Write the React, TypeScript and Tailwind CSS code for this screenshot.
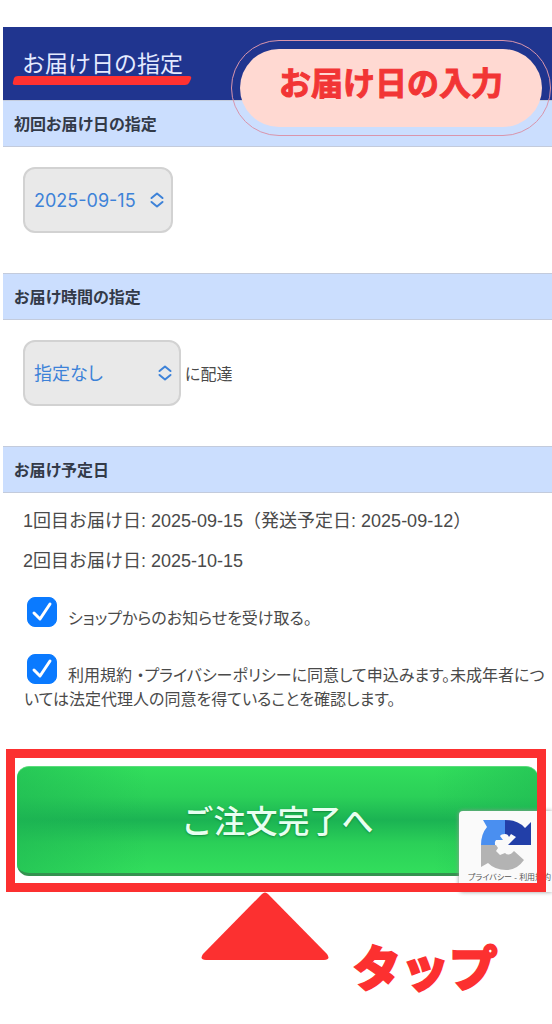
import type { ReactNode } from "react";

const schedule = [
  "1回目お届け日: 2025-09-15（発送予定日: 2025-09-12）",
  "2回目お届け日: 2025-10-15",
];

const agreements = [
  { id: "news", text: "ショップからのお知らせを受け取る。" },
  {
    id: "terms",
    text: "利用規約 ・プライバシーポリシーに同意して申込みます。未成年者については法定代理人の同意を得ていることを確認します。",
  },
];

function SectionTitle({ children }: { children: ReactNode }) {
  return (
    <h2 className="flex h-[47px] items-center border-y border-[#c3cbdc] bg-[#cbdefe] px-[11px] pt-0.5 text-base font-bold text-[#333a48] [font-feature-settings:'palt']">
      {children}
    </h2>
  );
}

function SelectBox({ id, label, value, className }: { id: string; label: string; value: string; className: string }) {
  return (
    <div className="relative w-fit">
      <select
        id={id}
        aria-label={label}
        className={`block h-[66px] appearance-none rounded-xl border-2 border-[#d2d2d2] bg-[#e9e9e9] pt-0.5 pl-[9px] leading-8 text-[#3d82d8] [font-feature-settings:'palt'] ${className}`}
      >
        <option>{value}</option>
      </select>
      <svg className="pointer-events-none absolute top-1/2 right-2 h-4 w-4 -translate-y-1/2" viewBox="0 0 16 16" fill="none" stroke="#3d82d8" strokeWidth="2" strokeLinecap="round" strokeLinejoin="round">
        <path d="M2.500 6L8 1.500 13.500 6M2.500 10L8 14.500l5.500-4.500" />
      </svg>
    </div>
  );
}

function RecaptchaBadge() {
  return (
    <div className="absolute right-0 bottom-0 h-[81px] w-[93px] rounded-l-sm bg-[#fafafa] shadow-[0_0_4px_#999]">
      <svg className="mt-[9px] ml-[22px] h-[50px] w-[50px]" viewBox="0 0 50 50">
        <path fill="#4a8ff0" d="M2 0H24V14q-4 0-5 2l3 4-7 0q-2 2-1 5H0Q0 14 6 7z" />
        <path fill="#223fa8" d="M24 0q13 0 20 8l6-6v23H27l8-8-5-3-2 3q-1-3-4-3z" />
        <path fill="#b3b3b3" d="M0 25H15l2 3-2 3 4 4 5-2q4 4 9-2l10 9Q36 50 25 50 14 50 7 43L0 47z" />
      </svg>
      <p className="ml-[9px] text-[8px] leading-4 whitespace-nowrap text-[#555] [font-feature-settings:'palt']">
        <a href="#privacy">プライバシー</a> - <a href="#terms">利用規約</a>
      </p>
    </div>
  );
}

export default function App() {
  return (
    <main className="overflow-hidden bg-white pt-[27px] pb-5 font-['Liberation_Sans','Noto_Sans_CJK_JP',sans-serif] text-[#4a4a4a]">
      <div className="relative pl-[3px]">
        <header className="flex h-[73px] items-center bg-[#20358f] px-[19px]">
          <h1 className="relative text-[23px] leading-8 text-[#e4eaff]">
            お届け日の指定
            <svg className="absolute top-[27px] -left-[10px] h-[11px] w-[180px]" viewBox="0 0 180 11">
              <path fill="#ff3131" d="M6 1H177q3 0 2 3l-2 4q-1 2-4 2H3q-3 0-2-3l1-4q1-2 4-2z" />
            </svg>
          </h1>
        </header>

        {/* callout pill */}
        <div className="absolute top-[13px] right-px rounded-full border border-[#d995ac] p-2">
          <p className="flex h-[78px] w-[302px] justify-center rounded-full bg-[#ffd9d2] pt-2 text-[32px] leading-[54px] font-bold text-[#f23535] [-webkit-text-stroke:1px_#f23535]">
            お届け日の入力
          </p>
        </div>

        <SectionTitle>初回お届け日の指定</SectionTitle>
        <div className="px-5 pt-5 pb-10">
          <SelectBox id="date" label="初回お届け日" value="2025-09-15" className="w-[150px] font-['Inter','Noto_Sans_CJK_JP',sans-serif] text-lg" />
        </div>

        <SectionTitle>お届け時間の指定</SectionTitle>
        <div className="flex items-center gap-1 px-5 pt-5 pb-10">
          <SelectBox id="time" label="お届け時間" value="指定なし" className="w-[158px] text-lg" />
          <span className="pt-[3px] text-base [font-feature-settings:'palt']">に配達</span>
        </div>

        <SectionTitle>お届け予定日</SectionTitle>
        <div className="px-5 pt-2 text-lg leading-10">
          {schedule.map((line) => (
            <p key={line}>{line}</p>
          ))}
        </div>
      </div>

      <div className="flex flex-col gap-[23px] pt-4 pr-1 pl-6">
        {agreements.map((item) => (
          <label key={item.id} htmlFor={item.id} className="block text-base leading-6 [font-feature-settings:'palt']">
            <span className="relative mr-[11px] ml-[3px] inline-block h-[30px] w-[30px] align-[-3px]">
              <input id={item.id} type="checkbox" defaultChecked className="peer block h-full w-full appearance-none rounded-lg border border-[#0a7aff] checked:bg-[#0a7aff]" />
              <svg className="pointer-events-none absolute inset-0 hidden peer-checked:block" viewBox="0 0 30 30" fill="none" stroke="#fff" strokeWidth="3" strokeLinecap="round" strokeLinejoin="round">
                <path d="M7 16l6 6L23 7" />
              </svg>
            </span>
            {item.text}
          </label>
        ))}
      </div>

      {/* submit button with the red frame laid over it */}
      <div className="relative mt-[37px] pt-[17px] pr-[14px] pb-4 pl-[17px]">
        <button className="block h-[110px] w-full rounded-xl border-t border-b-3 border-t-[#5bdc7c] border-b-[#34924f] bg-[linear-gradient(90deg,#1db55288,transparent_25%,transparent_80%,#1db55288),linear-gradient(#32de5c,#2bd058_28%,#1bb353_50%,#2bd058_72%,#32de5c)] pt-1 text-[32px] font-medium text-[#e8fff0] [text-shadow:0_1px_2px_#128a3c]">
          ご注文完了へ
        </button>
        <RecaptchaBadge />
        <div className="pointer-events-none absolute inset-y-0 right-[6px] left-[6px] border-[9px] border-[#fc3030]" />
      </div>

      <div className="flex gap-6 pl-[201px] text-[#fc3030]">
        <svg className="h-[68px] w-32 shrink-0" viewBox="0 0 128 68" fill="currentColor">
          <path d="M61 2q3-3 6 0l59 60q4 6-3 6H5q-7 0-3-6z" />
        </svg>
        <p className="pt-10 text-5xl leading-[76px] font-bold whitespace-nowrap [-webkit-text-stroke:3px_#fc3030]">タップ</p>
      </div>
    </main>
  );
}
